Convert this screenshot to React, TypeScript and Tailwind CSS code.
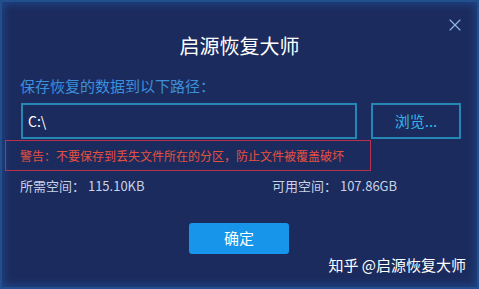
import { X } from 'lucide-react';

const font = { fontFamily: '"Microsoft YaHei", "Noto Sans CJK SC", "Noto Sans", sans-serif' };

export default function App() {
  return (
    <div className="h-[289px] w-[479px] overflow-hidden bg-[#22508f] p-[2px]" style={font}>
      <div className="relative flex h-full w-full flex-col bg-[#1b2b5e] shadow-[inset_0_0_8px_2px_#1f4584]">
        <button type="button" className="absolute right-[12px] top-[13px] text-[#8fb2e6]">
          <X size={20} strokeWidth={1.4} />
        </button>

        <h1 className="mt-[30px] text-center text-[20px] leading-[28px] text-white">启源恢复大师</h1>

        <p className="ml-[18px] mt-[15px] text-[15px] leading-[22px] text-[#3b8fdb]">保存恢复的数据到以下路径：</p>

        <div className="ml-[19px] mr-[16px] mt-[6px] flex gap-[14px]">
          <div className="flex h-[36px] w-[336px] items-center border-2 border-[#2487b4] px-[5px] text-[14px] text-white">C:\</div>
          <button
            type="button"
            className="h-[36px] flex-1 border-2 border-[#2487b4] text-[15px] text-[#36b3e8]"
          >
            浏览...
          </button>
        </div>

        <div className="ml-[3px] mt-[1px] flex h-[31px] w-[366px] items-center border border-[#b8304c] pl-[14px] text-[12px] text-[#e8503e]">
          警告：不要保存到丢失文件所在的分区，防止文件被覆盖破坏
        </div>

        <div className="ml-[18px] mt-[5px] flex text-[13px] leading-[20px] text-[#c9d2e4]">
          <span className="w-[252px]">所需空间：&nbsp;115.10KB</span>
          <span>可用空间：&nbsp;107.86GB</span>
        </div>

        <div className="mt-[27px] flex justify-center">
          <button
            type="button"
            className="ml-[-1px] h-[31px] w-[100px] rounded-[3px] bg-[#1795ea] text-[15px] text-white"
          >
            确定
          </button>
        </div>

        <div className="mt-0 mr-[11px] text-right text-[15px] leading-[22px] text-white">知乎 @启源恢复大师</div>
      </div>
    </div>
  );
}
